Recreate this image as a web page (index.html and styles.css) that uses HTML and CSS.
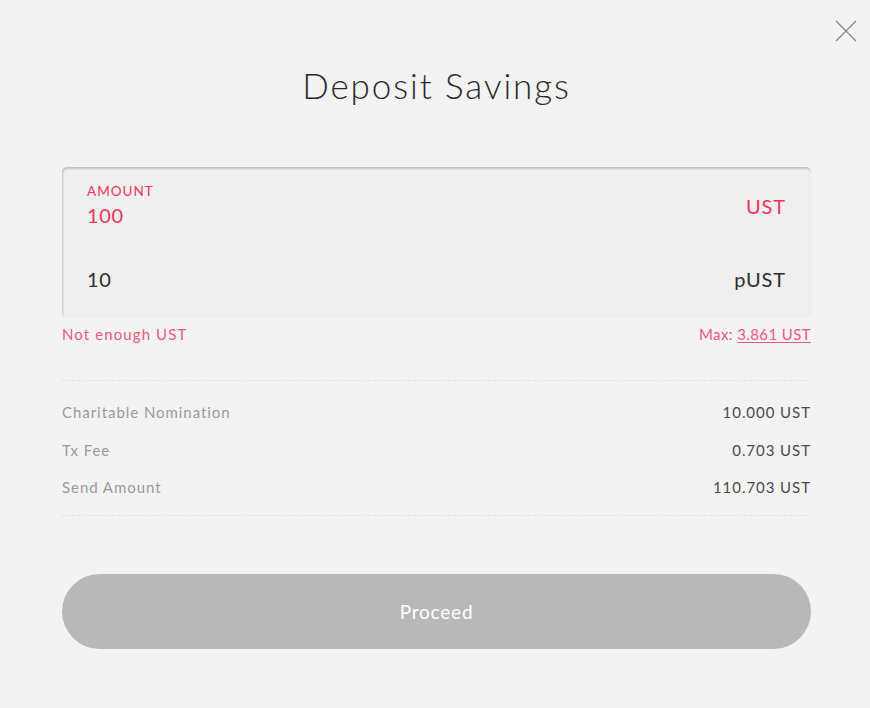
FILE: index.html
```html
<!DOCTYPE html>
<html>
<head>
<meta charset="utf-8">
<link rel="stylesheet" href="styles.css">
</head>
<body>
<div class="dialog">
  <button class="close" aria-label="Close">
    <svg width="22" height="22" viewBox="0 0 22 22"><path d="M1 1L21 21M21 1L1 21" stroke="#8a8a8a" stroke-width="1.3" fill="none"/></svg>
  </button>
  <h1 class="title">Deposit Savings</h1>
  <div class="field">
    <div class="row row-main">
      <div class="left">
        <div class="label">AMOUNT</div>
        <div class="value pink">100</div>
      </div>
      <div class="unit pink">UST</div>
    </div>
    <div class="row row-sub">
      <div class="value">10</div>
      <div class="unit">pUST</div>
    </div>
  </div>
  <div class="hints">
    <span class="error">Not enough UST</span>
    <span class="max">Max: <u>3.861 UST</u></span>
  </div>
  <div class="summary">
    <div class="srow"><span class="k">Charitable Nomination</span><span class="v">10.000 UST</span></div>
    <div class="srow"><span class="k">Tx Fee</span><span class="v">0.703 UST</span></div>
    <div class="srow"><span class="k">Send Amount</span><span class="v">110.703 UST</span></div>
  </div>
  <button class="proceed">Proceed</button>
</div>
</body>
</html>
```
FILE: styles.css
```css
* { box-sizing: border-box; }
html, body { margin: 0; padding: 0; }
body {
  background: #f3f3f3;
  font-family: "Lato", "Open Sans", sans-serif;
  color: #2d2d2d;
  width: 870px;
  height: 708px;
}
.dialog {
  position: relative;
  padding: 0 59px 0 62px;
}
.close {
  position: absolute;
  top: 20px;
  right: 13px;
  background: none;
  border: 0;
  padding: 0;
  width: 22px;
  height: 22px;
  cursor: pointer;
}
.close svg { display: block; }
.title {
  margin: 0;
  padding-top: 63px;
  text-align: center;
  font-weight: 300;
  font-size: 35px;
  letter-spacing: 1.9px;
  line-height: 44px;
  color: #2a2a2a;
  height: 167px;
}
.field {
  background: #efefef;
  border-radius: 5px;
  box-shadow: inset 1px 2px 2px rgba(0,0,0,0.18);
  height: 151px;
  padding: 16px 25px 0 25px;
}
.row { display: flex; justify-content: space-between; }
.row-main { height: 84px; align-items: flex-start; }
.label { font-size: 13.5px; color: #f0335a; letter-spacing: 1px; line-height: 16px; }
.value { font-size: 20px; line-height: 24px; margin-top: 4px; letter-spacing: 0.6px; }
.pink { color: #f0335a; }
.unit { font-size: 20px; line-height: 24px; margin-top: 11px; letter-spacing: 0.9px; }
.row-sub { align-items: center; }
.row-sub .value, .row-sub .unit { margin-top: 0; }
.hints {
  display: flex;
  justify-content: space-between;
  font-size: 15px;
  letter-spacing: 1.1px;
  line-height: 18px;
  margin-top: 7px;
  color: #eb5a7d;
}
.hints .max { letter-spacing: 0.4px; }
.max u { text-underline-offset: 2px; }
.summary {
  margin-top: 37px;
  margin-right: 4px;
  border-top: 1px dashed #e2e2e2;
  border-bottom: 1px dashed #e2e2e2;
  padding: 22px 0 19px;
}
.srow {
  display: flex;
  justify-content: space-between;
  font-size: 15px;
  letter-spacing: 0.95px;
  line-height: 18px;
  margin-right: -4px;
}
.srow + .srow { margin-top: 19.5px; }
.k { color: #9a9a9a; }
.v { color: #4a4a4a; }
.proceed {
  display: block;
  width: 100%;
  margin-top: 58px;
  height: 75px;
  border: 0;
  border-radius: 38px;
  background: #b8b8b8;
  color: #fff;
  font-family: inherit;
  font-size: 19px;
  letter-spacing: 0.8px;
}
```
